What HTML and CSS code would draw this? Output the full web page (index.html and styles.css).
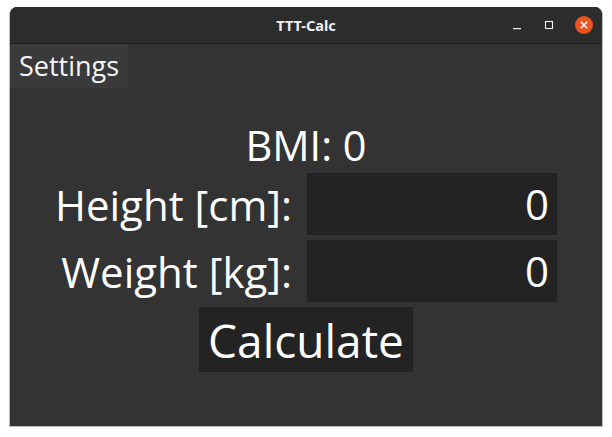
FILE: index.html
```html
<!DOCTYPE html>
<html>
<head>
<meta charset="utf-8">
<link rel="stylesheet" href="styles.css">
</head>
<body>
<div class="window">
  <header class="titlebar">
    <div class="spacer"></div>
    <div class="title">TTT-Calc</div>
    <div class="controls">
      <span class="ctl min"><svg width="10" height="10" viewBox="0 0 10 10"><rect x="1" y="8" width="8" height="1.2" fill="#f2f2f2"/></svg></span>
      <span class="ctl max"><svg width="10" height="10" viewBox="0 0 10 10"><rect x="1.5" y="1.5" width="7" height="7" fill="none" stroke="#f2f2f2" stroke-width="1.1"/></svg></span>
      <span class="ctl close"><svg width="18" height="18" viewBox="0 0 18 18"><circle cx="9" cy="9" r="9" fill="#e95420"/><path d="M5.8 5.8 L12.2 12.2 M12.2 5.8 L5.8 12.2" stroke="#fff" stroke-width="1.4"/></svg></span>
    </div>
  </header>
  <nav class="menubar"><div class="menu-item">Settings</div></nav>
  <main class="content">
    <div class="bmi">BMI: 0</div>
    <div class="form">
      <label class="label">Height [cm]:</label>
      <div class="field">0</div>
      <label class="label">Weight [kg]:</label>
      <div class="field">0</div>
    </div>
    <button class="calc">Calculate</button>
  </main>
</div>
</body>
</html>
```
FILE: styles.css
```css
html, body {
  margin: 0;
  padding: 0;
  background: #ffffff;
}
body {
  padding: 7px 9px 10px 9px;
  font-family: "Open Sans", "Noto Sans", sans-serif;
}
.window {
  width: 594px;
  height: 420px;
  box-sizing: border-box;
  background: #333333;
  border: 1px solid #bdbdbd;
  border-top: none;
  border-radius: 8px 8px 0 0;
  overflow: hidden;
  display: flex;
  flex-direction: column;
}
.titlebar {
  height: 36px;
  background: #2c2c2c;
  border-bottom: 1px solid #1e1e1e;
  display: grid;
  grid-template-columns: 1fr auto 1fr;
  align-items: center;
  flex: none;
}
.title {
  color: #f0f0f0;
  font-family: "Noto Sans", sans-serif;
  font-weight: bold;
  font-size: 14.5px;
}
.controls {
  display: flex;
  justify-content: flex-end;
  align-items: center;
  padding-right: 8px;
}
.ctl {
  display: flex;
  align-items: center;
  justify-content: center;
}
.min { width: 30px; }
.max { width: 34px; }
.close { width: 20px; margin-left: 8px; }
.menubar {
  display: flex;
  height: 44px;
  flex: none;
}
.menu-item {
  background: #3a3a3a;
  color: #f5f5f5;
  font-size: 27px;
  width: 118px;
  box-sizing: border-box;
  padding-left: 9px;
  line-height: 44px;
}
.content {
  display: flex;
  flex-direction: column;
  align-items: center;
  padding-top: 30px;
  padding-left: 0;
  color: #ffffff;
}
.bmi {
  font-size: 41.5px;
  line-height: 55px;
}
.form {
  display: grid;
  grid-template-columns: auto 250px;
  column-gap: 15px;
  row-gap: 5px;
  align-items: center;
}
.label {
  font-size: 42px;
  text-align: right;
}
.field {
  background: #232323;
  height: 62px;
  font-size: 42px;
  line-height: 62px;
  text-align: right;
  padding-right: 8px;
}
.calc {
  margin-top: 5px;
  background: #232323;
  color: #ffffff;
  border: none;
  font-family: inherit;
  font-size: 46px;
  width: 214px;
  height: 65px;
  padding: 0;
}
```
